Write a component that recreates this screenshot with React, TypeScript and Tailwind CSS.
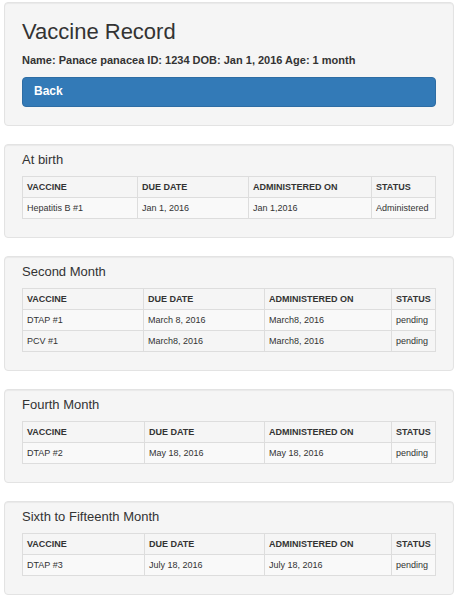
type Schedule = {
  title: string;
  cols: string[];
  rows: string[][];
};

const standardCols = ["w-[122px]", "w-[120px]", "w-[127px]", "w-[44px]"];

const schedules: Schedule[] = [
  {
    title: "At birth",
    cols: ["w-[115px]", "w-[111px]", "w-[123px]", "w-[64px]"],
    rows: [["Hepatitis B #1", "Jan 1, 2016", "Jan 1,2016", "Administered"]],
  },
  {
    title: "Second Month",
    cols: ["w-[121px]", "w-[121px]", "w-[127px]", "w-[44px]"],
    rows: [
      ["DTAP #1", "March 8, 2016", "March8, 2016", "pending"],
      ["PCV #1", "March8, 2016", "March8, 2016", "pending"],
    ],
  },
  {
    title: "Fourth Month",
    cols: standardCols,
    rows: [["DTAP #2", "May 18, 2016", "May 18, 2016", "pending"]],
  },
  {
    title: "Sixth to Fifteenth Month",
    cols: standardCols,
    rows: [["DTAP #3", "July 18, 2016", "July 18, 2016", "pending"]],
  },
];

const headings = ["VACCINE", "DUE DATE", "ADMINISTERED ON", "STATUS"];

const card = "rounded border border-[#e3e3e3] bg-[#f5f5f5] px-[17px] pb-[18px] shadow-[inset_0_1px_1px_rgba(0,0,0,0.05)]";

function ScheduleCard({ title, cols, rows }: Schedule) {
  return (
    <section className={`${card} pt-[7px]`}>
      <h2 className="text-[13px] leading-4">{title}</h2>
      <table className="mt-2 w-full table-fixed border-collapse text-left text-[9px] leading-3">
        <colgroup>
          {cols.map((width, i) => (
            <col key={i} className={width} />
          ))}
        </colgroup>
        <thead>
          <tr>
            {headings.map((heading) => (
              <th key={heading} scope="col" className="whitespace-nowrap border border-[#dddddd] px-1 py-1 font-bold">
                {heading}
              </th>
            ))}
          </tr>
        </thead>
        <tbody>
          {rows.map((row) => (
            <tr key={row[0]} className="odd:bg-[#f9f9f9]">
              {row.map((cell, i) => (
                <td key={i} className="whitespace-nowrap border border-[#dddddd] px-1 py-1">
                  {cell}
                </td>
              ))}
            </tr>
          ))}
        </tbody>
      </table>
    </section>
  );
}

export default function App() {
  return (
    <main className="flex flex-col gap-[18px] bg-white pt-[2px] pr-[3px] pb-1 pl-1 font-['Liberation_Sans',Arial,sans-serif] text-[#333333]">
      <header className={`${card} pt-[17px]`}>
        <h1 className="text-[22px] leading-6">Vaccine Record</h1>
        <p className="mt-2 text-[11px] leading-4 font-bold">
          Name: Panace panacea ID: 1234 DOB: Jan 1, 2016 Age: 1 month
        </p>
        <button
          type="button"
          className="mt-[9px] block w-full rounded border border-[#2e6da4] bg-[#337ab7] px-[11px] pt-[5px] pb-[7px] text-left text-xs leading-4 font-bold text-white"
        >
          Back
        </button>
      </header>
      {schedules.map((schedule) => (
        <ScheduleCard key={schedule.title} {...schedule} />
      ))}
    </main>
  );
}
